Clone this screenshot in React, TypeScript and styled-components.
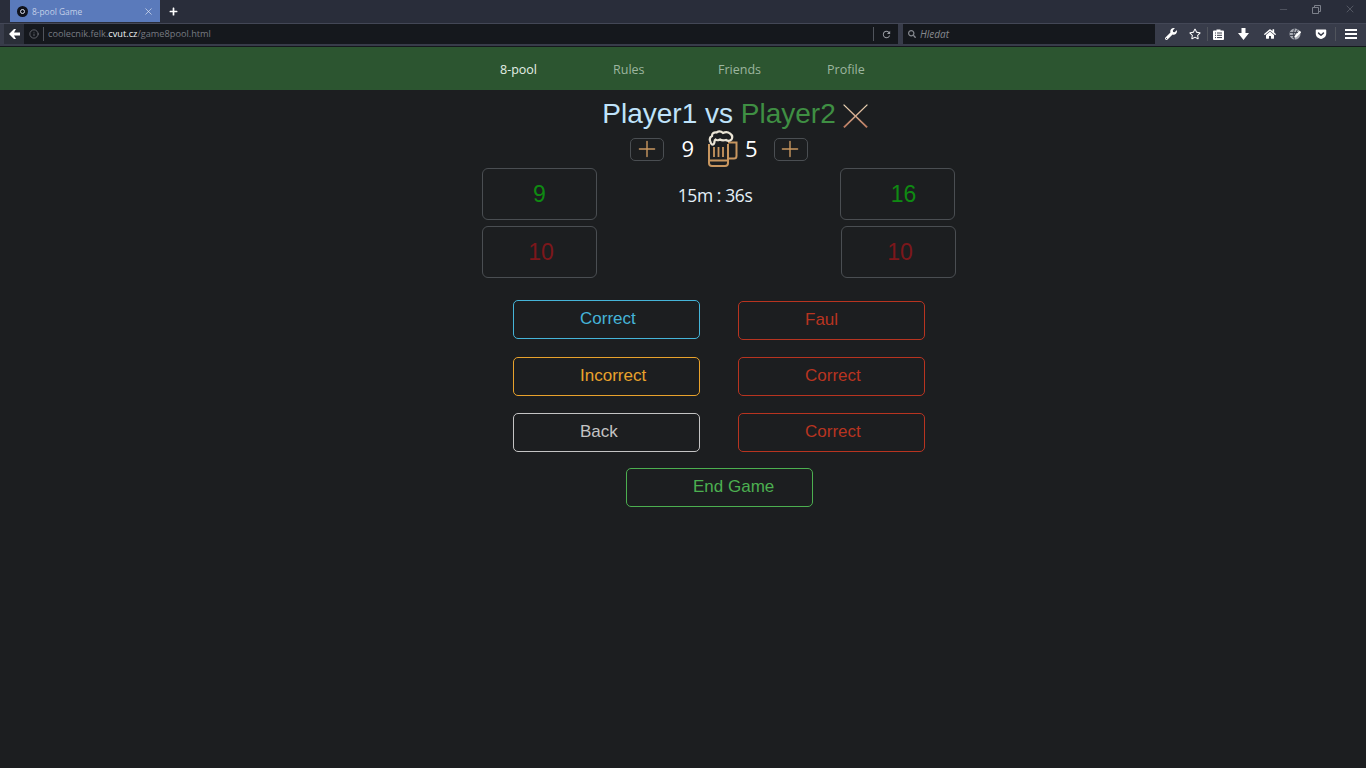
import React from "react";
import styled, { createGlobalStyle } from "styled-components";
import { FaGetPocket, FaHome, FaPlus, FaRegStar, FaSearch, FaWrench } from "react-icons/fa";
import { MdRefresh } from "react-icons/md";
import { Info, Minus, Plus, X } from "lucide-react";

const GlobalStyle = createGlobalStyle`
  html, body {
    margin: 0;
    height: 100%;
    background: #1c1e20;
    font-family: "Liberation Sans", Arial, sans-serif;
  }
`;

const TabStrip = styled.div`
  height: 23px;
  background: #292d3a;
  display: flex;
  padding-left: 10px;
  box-sizing: border-box;
`;
const Tab = styled.div`
  width: 150px;
  height: 22px;
  background: #5a7abb;
  display: flex;
  align-items: center;
  padding: 0 6px 0 7px;
  box-sizing: border-box;
  color: #c3d0e8;
  font: 8.4px "Open Sans", sans-serif;
`;
const TabLogo = styled.span`
  width: 11px;
  height: 11px;
  border-radius: 50%;
  background: #10131c;
  margin-right: 4px;
  display: flex;
  align-items: center;
  justify-content: center;
  &::after {
    content: "";
    width: 3px;
    height: 3px;
    border-radius: 50%;
    border: 1px solid #d8dde8;
  }
`;
const TabTitle = styled.span`
  flex: 1;
`;
const NewTab = styled.div`
  width: 26px;
  display: flex;
  align-items: center;
  justify-content: center;
  color: #fff;
  font-size: 9px;
`;
const WindowControls = styled.div`
  margin-left: auto;
  display: flex;
  align-items: center;
  padding-bottom: 5px;
  color: #7c808a;
`;
const WindowButton = styled.div<{ $width: number }>`
  width: ${(p) => p.$width}px;
  display: flex;
  justify-content: center;
`;
const Toolbar = styled.div`
  height: 24px;
  background: #383c4a;
  border-top: 1px solid #434756;
  border-bottom: 1px solid #15181d;
  box-sizing: border-box;
  display: flex;
  align-items: flex-start;
  padding-left: 4px;
  color: #fff;
`;
const UrlBar = styled.div`
  width: 894px;
  height: 20px;
  background: #15181d;
  display: flex;
  align-items: center;
  color: #777b82;
  font: 9.2px "Open Sans", sans-serif;
`;
const BackButton = styled.div`
  width: 20px;
  height: 20px;
  background: #2a2e38;
  display: flex;
  align-items: center;
  justify-content: center;
  margin-right: 5px;
`;
const UrlText = styled.span`
  flex: 1;
  margin-left: 4px;
  padding-left: 4px;
  border-left: 1px solid #50545c;
  line-height: 14px;
`;
const UrlHost = styled.span`
  color: #f2f4f6;
`;
const ReloadSlot = styled.div`
  width: 24px;
  height: 14px;
  border-left: 1px solid #50545c;
  display: flex;
  align-items: center;
  justify-content: center;
  color: #9a9da3;
  font-size: 11px;
`;
const SearchBar = styled.div`
  width: 252px;
  height: 20px;
  margin-left: 5px;
  background: #15181d;
  display: flex;
  align-items: center;
  gap: 4px;
  padding-left: 5px;
  box-sizing: border-box;
  color: #85888e;
  font: italic 10px "Open Sans", sans-serif;
`;
const ToolIcons = styled.div`
  display: flex;
  align-items: center;
  height: 20px;
  margin-left: 3px;
`;
const ToolIcon = styled.div<{ $width: number }>`
  width: ${(p) => p.$width}px;
  height: 20px;
  display: flex;
  align-items: center;
  justify-content: center;
  font-size: 12px;
  color: #fff;
`;
const ToolSep = styled.div`
  width: 1px;
  height: 14px;
  background: #50545c;
  margin-right: -1px;
`;
const NavBar = styled.nav`
  height: 43px;
  background: #2c5530;
  display: flex;
  align-items: center;
  padding: 2px 0 0 500px;
  box-sizing: border-box;
`;
const NavLink = styled.a<{ $active?: boolean; $width: number }>`
  width: ${(p) => p.$width}px;
  color: ${(p) => (p.$active ? "#e4efe6" : "#9db59f")};
  font: 12.5px "Open Sans", sans-serif;
`;
const Main = styled.main`
  width: 474px;
  margin-left: 482px;
  display: flex;
  flex-direction: column;
`;
const Title = styled.h1`
  margin: 8px 0 0;
  height: 32px;
  display: flex;
  justify-content: center;
  align-items: center;
  font-size: 28px;
  font-weight: 400;
  line-height: 32px;
  color: #bfe3fa;
  position: relative;
`;
const VsWord = styled.span`
  white-space: pre;
`;
const Opponent = styled.span`
  color: #3f8f43;
`;
const CueIcon = styled.svg`
  position: absolute;
  left: 361px;
  top: 6px;
`;
const ScoreRow = styled.div`
  height: 38px;
  display: flex;
  justify-content: center;
  align-items: center;
  color: #fff;
  font: 22px "Open Sans", sans-serif;
`;
const AddButton = styled.button`
  width: 34px;
  height: 23px;
  padding: 0 1px 0 0;
  background: transparent;
  border: 1px solid #4a4e52;
  border-radius: 5px;
  color: #c8965f;
  display: flex;
  align-items: center;
  justify-content: center;
`;
const BeerCount = styled.span<{ $left: number; $right: number }>`
  margin: -3px ${(p) => p.$right}px 0 ${(p) => p.$left}px;
`;
const MugIcon = styled.svg`
  margin-top: -1px;
`;
const Board = styled.div`
  display: grid;
  grid-template-columns: 115px 243px 115px;
  grid-template-rows: 52px 52px;
  row-gap: 6px;
`;
const ScoreBox = styled.div<{ $win?: boolean; $shift?: number; $offset?: number }>`
  box-sizing: border-box;
  width: 115px;
  border: 1px solid #4a4e52;
  border-radius: 6px;
  display: flex;
  align-items: center;
  justify-content: center;
  padding-left: ${(p) => p.$shift ?? 0}px;
  margin-left: ${(p) => p.$offset ?? 0}px;
  font-size: 23px;
  color: ${(p) => (p.$win ? "#0f8a12" : "#7c171b")};
`;
const Timer = styled.div`
  display: flex;
  justify-content: center;
  align-items: center;
  padding: 2px 7px 0 0;
  color: #e4f0f8;
  font: 17.5px "Open Sans", sans-serif;
  letter-spacing: -0.4px;
`;
const Spacer = styled.div``;
const Actions = styled.div`
  margin: 23px 0 0 31px;
  display: grid;
  grid-template-columns: 187px 187px;
  grid-auto-rows: 39px;
  column-gap: 38px;
  row-gap: 17px;
`;
const ActionButton = styled.button<{ $color: string; $raise?: boolean }>`
  box-sizing: border-box;
  height: 39px;
  width: 187px;
  margin-top: ${(p) => (p.$raise ? -1 : 0)}px;
  padding: 0 0 1px 66px;
  background: transparent;
  border: 1px solid ${(p) => p.$color};
  border-radius: 5px;
  color: ${(p) => p.$color};
  text-align: left;
  font: 17px "Liberation Sans", Arial, sans-serif;
`;
const EndRow = styled.div`
  margin: 16px 0 0 144px;
`;

function CueSticks() {
  return (
    <CueIcon width="25" height="24" viewBox="0 0 25 24" fill="none">
      <defs>
        <linearGradient id="cueA" x1="0" y1="0" x2="1" y2="1">
          <stop offset="0" stopColor="#f0dcbc" />
          <stop offset="1" stopColor="#b8745a" />
        </linearGradient>
        <linearGradient id="cueB" x1="1" y1="0" x2="0" y2="1">
          <stop offset="0" stopColor="#f0dcbc" />
          <stop offset="1" stopColor="#b8745a" />
        </linearGradient>
      </defs>
      <path d="M1 0.2 L24.8 22.8 L23.4 24 L0.2 1 Z" fill="url(#cueA)" />
      <path d="M24 0.2 L0.2 22.8 L1.6 24 L24.8 1 Z" fill="url(#cueB)" />
    </CueIcon>
  );
}

function BeerMug() {
  return (
    <MugIcon width="30" height="37" viewBox="0 0 30 37" fill="none">
      <path d="M1 14 V33 Q1 36 4 36 H17 Q20 36 20 33 V14" stroke="#c8965f" strokeWidth="2" />
      <path d="M1 30.5 H20" stroke="#c8965f" strokeWidth="2" />
      <path d="M6 17 V27 M10.5 17 V27 M15 17 V27" stroke="#c8965f" strokeWidth="1.8" />
      <path d="M20 12.5 H28.5 V26 Q28.5 28.5 26 28.5 H20" stroke="#c8965f" strokeWidth="2" />
      <path
        d="M2.5 12 Q0.5 8 4 6 Q4 2 8.5 2.5 Q12 0 15 3 Q19 1 22 3.5 Q25.5 6 23.5 9.5 Q21 12 18 10 Q14 11 12 9.5 Q9 11 7.5 9.5 Q6.5 10 6.5 12 Q6 15 4 14.5 Q3 14 2.5 12 Z"
        fill="#1c1e20"
        stroke="#ebe5d6"
        strokeWidth="2.2"
      />
    </MugIcon>
  );
}

function BackArrow() {
  return (
    <svg width="11" height="10" viewBox="0 0 11 10">
      <path d="M0 5 L5 0 H7 L5 3.5 H11 V6.5 H5 L7 10 H5 Z" fill="#fff" />
    </svg>
  );
}

function RestoreIcon() {
  return (
    <svg width="9" height="9" viewBox="0 0 9 9" fill="none" stroke="currentColor">
      <path d="M0.5 2.5 H6.5 V8.5 H0.5 Z" />
      <path d="M2.5 2.5 V0.5 H8.5 V6.5 H6.5" />
    </svg>
  );
}

function ClipboardIcon() {
  return (
    <svg width="11" height="11" viewBox="0 0 11 11">
      <path d="M1 1.5 H3.5 V0.5 H7.5 V1.5 H10 Q11 1.5 11 2.5 V10 Q11 11 10 11 H1 Q0 11 0 10 V2.5 Q0 1.5 1 1.5 Z" fill="#fff" />
      <path d="M2 4 H3 M4 4 H9 M2 6.3 H3 M4 6.3 H9 M2 8.6 H3 M4 8.6 H9" stroke="#383c4a" strokeWidth="1" />
    </svg>
  );
}

function DownArrow() {
  return (
    <svg width="11" height="12" viewBox="0 0 11 12">
      <path d="M3.5 0 H7.5 V5 H11 L5.5 12 L0 5 H3.5 Z" fill="#fff" />
    </svg>
  );
}

function GlobeIcon() {
  return (
    <svg width="12" height="12" viewBox="0 0 12 12" fill="none">
      <circle cx="6" cy="6" r="5.5" fill="#a9acb4" />
      <path d="M1 4.5 H9 M1 7.5 H7 M5.5 0.5 Q3 6 5.5 11.5 M8.5 1.5 L4 10" stroke="#383c4a" strokeWidth="0.9" />
      <path d="M6 9 L11.5 3.5" stroke="#fff" strokeWidth="2" />
    </svg>
  );
}

function MenuIcon() {
  return (
    <svg width="12" height="10" viewBox="0 0 12 10">
      <path d="M0 0 H12 V2 H0 Z M0 4 H12 V6 H0 Z M0 8 H12 V10 H0 Z" fill="#fff" />
    </svg>
  );
}

export default function App() {
  return (
    <>
      <GlobalStyle />
      <TabStrip>
        <Tab>
          <TabLogo />
          <TabTitle>8-pool Game</TabTitle>
          <X size={11} strokeWidth={1.4} color="#e8edf6" />
        </Tab>
        <NewTab>
          <FaPlus />
        </NewTab>
        <WindowControls>
          <WindowButton $width={34}>
            <Minus size={11} strokeWidth={1} />
          </WindowButton>
          <WindowButton $width={33}>
            <RestoreIcon />
          </WindowButton>
          <WindowButton $width={33}>
            <X size={12} strokeWidth={1} />
          </WindowButton>
        </WindowControls>
      </TabStrip>
      <Toolbar>
        <UrlBar>
          <BackButton>
            <BackArrow />
          </BackButton>
          <Info size={10} strokeWidth={1.3} color="#9a9da3" />
          <UrlText>
            coolecnik.felk.<UrlHost>cvut.cz</UrlHost>/game8pool.html
          </UrlText>
          <ReloadSlot>
            <MdRefresh />
          </ReloadSlot>
        </UrlBar>
        <SearchBar>
          <FaSearch size={8} />
          Hledat
        </SearchBar>
        <ToolIcons>
          <ToolIcon $width={25}>
            <FaWrench />
          </ToolIcon>
          <ToolIcon $width={24}>
            <FaRegStar />
          </ToolIcon>
          <ToolSep />
          <ToolIcon $width={23}>
            <ClipboardIcon />
          </ToolIcon>
          <ToolIcon $width={27}>
            <DownArrow />
          </ToolIcon>
          <ToolIcon $width={25}>
            <FaHome />
          </ToolIcon>
          <ToolIcon $width={25}>
            <GlobeIcon />
          </ToolIcon>
          <ToolIcon $width={28}>
            <FaGetPocket />
          </ToolIcon>
          <ToolSep />
          <ToolIcon $width={31}>
            <MenuIcon />
          </ToolIcon>
        </ToolIcons>
      </Toolbar>
      <NavBar>
        <NavLink $active $width={113}>8-pool</NavLink>
        <NavLink $width={105}>Rules</NavLink>
        <NavLink $width={109}>Friends</NavLink>
        <NavLink $width={60}>Profile</NavLink>
      </NavBar>
      <Main>
        <Title>
          Player1<VsWord> vs </VsWord>
          <Opponent>Player2</Opponent>
          <CueSticks />
        </Title>
        <ScoreRow>
          <AddButton>
            <Plus size={26} strokeWidth={1.3} />
          </AddButton>
          <BeerCount $left={17} $right={14}>9</BeerCount>
          <BeerMug />
          <BeerCount $left={7} $right={16}>5</BeerCount>
          <AddButton>
            <Plus size={26} strokeWidth={1.3} />
          </AddButton>
        </ScoreRow>
        <Board>
          <ScoreBox $win>9</ScoreBox>
          <Timer>15m : 36s</Timer>
          <ScoreBox $win $shift={12}>16</ScoreBox>
          <ScoreBox $shift={3}>10</ScoreBox>
          <Spacer />
          <ScoreBox $shift={3} $offset={1}>10</ScoreBox>
        </Board>
        <Actions>
          <ActionButton $color="#45b4d8" $raise>Correct</ActionButton>
          <ActionButton $color="#b83420">Faul</ActionButton>
          <ActionButton $color="#e8a22c">Incorrect</ActionButton>
          <ActionButton $color="#b83420">Correct</ActionButton>
          <ActionButton $color="#c4c4c4">Back</ActionButton>
          <ActionButton $color="#b83420">Correct</ActionButton>
        </Actions>
        <EndRow>
          <ActionButton $color="#4caf50">End Game</ActionButton>
        </EndRow>
      </Main>
    </>
  );
}
